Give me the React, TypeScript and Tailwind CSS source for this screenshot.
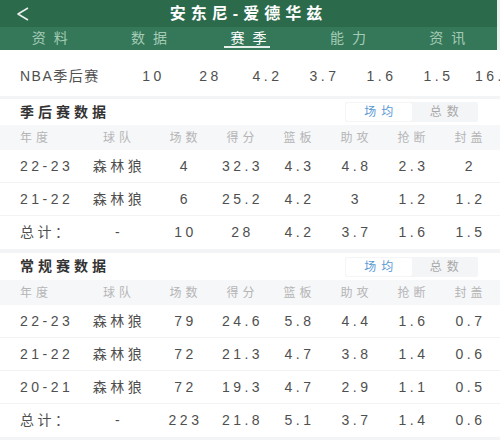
import React from 'react';

type Row = string[];

const tabs = ['资料', '数据', '赛季', '能力', '资讯'];

const columns = ['年度', '球队', '场数', '得分', '篮板', '助攻', '抢断', '封盖'];

const playoffRows: Row[] = [
  ['22-23', '森林狼', '4', '32.3', '4.3', '4.8', '2.3', '2'],
  ['21-22', '森林狼', '6', '25.2', '4.2', '3', '1.2', '1.2'],
  ['总计：', '-', '10', '28', '4.2', '3.7', '1.6', '1.5'],
];

const regularRows: Row[] = [
  ['22-23', '森林狼', '79', '24.6', '5.8', '4.4', '1.6', '0.7'],
  ['21-22', '森林狼', '72', '21.3', '4.7', '3.8', '1.4', '0.6'],
  ['20-21', '森林狼', '72', '19.3', '4.7', '2.9', '1.1', '0.5'],
  ['总计：', '-', '223', '21.8', '5.1', '3.7', '1.4', '0.6'],
];

// 8 columns: year, team, then six stats
const gridCols = 'grid grid-cols-[59px_76px_repeat(6,57px)] pl-[20px]';

function ToggleAvgTotal() {
  return (
    <div className="flex h-[20px] w-[133px] rounded-[2px] bg-[#f4f5f7] p-[1px] text-[12px] tracking-[5px]">
      <div className="flex flex-1 items-center justify-center rounded-[2px] bg-white pl-[5px] text-[#5a9ad3]">场均</div>
      <div className="flex flex-1 items-center justify-center pl-[5px] text-[#a8a8a8]">总数</div>
    </div>
  );
}

function StatTable({ title, rows, titleHeight }: { title: string; rows: Row[]; titleHeight: string }) {
  return (
    <div>
      <div className={`flex items-center justify-between pl-[20px] pr-[22px] ${titleHeight}`}>
        <span className="text-[14px] font-bold tracking-[4px] text-[#333]">{title}</span>
        <ToggleAvgTotal />
      </div>
      <div className={`${gridCols} h-[25px] items-center bg-[#f6f7f9] text-[12px] tracking-[4px] text-[#b5b5b5]`}>
        {columns.map((c, i) => (
          <span key={c} className={i === 0 ? 'text-left' : 'pl-[4px] text-center'}>
            {c}
          </span>
        ))}
      </div>
      {rows.map((r, ri) => (
        <div
          key={ri}
          className={`${gridCols} h-[33px] items-center text-[14px] tracking-[3.5px] text-[#4f4f4f] ${
            ri < rows.length - 1 ? 'border-b border-[#f3f3f3]' : ''
          }`}
        >
          {r.map((v, i) => (
            <span key={i} className={i === 0 ? 'text-left' : 'pl-[4px] text-center'}>
              {v}
            </span>
          ))}
        </div>
      ))}
    </div>
  );
}

export default function App() {
  const nbaStats = ['10', '28', '4.2', '3.7', '1.6', '1.5', '16.4'];

  return (
    <div className="h-[440px] w-[500px] overflow-hidden bg-[#f3f4f6] font-['Liberation_Sans','Noto_Sans_CJK_SC',sans-serif]">
      {/* Top bar */}
      <div className="border-r-[3px] border-[#e7f2ec]">
        <div className="flex h-[27px] items-center bg-[#2c6a4c] pl-[16px]">
          <svg width="14" height="14" viewBox="0 0 14 14" fill="none" className="shrink-0">
            <polyline points="12,1 2,7 12,13" stroke="#e8f1ec" strokeWidth="1.5" strokeLinejoin="round" />
          </svg>
          <div className="flex-1 pr-[30px] text-center text-[16px] font-bold tracking-[5px] text-white">安东尼-爱德华兹</div>
        </div>
        <div className="grid h-[23px] grid-cols-5 bg-[#357859]">
          {tabs.map((t) => {
            const active = t === '赛季';
            return (
              <div key={t} className="flex items-center justify-center">
                <span
                  className={`relative pl-[8px] text-[14px] tracking-[8px] leading-[23px] ${
                    active ? 'text-white' : 'text-[#a4cbb6]'
                  }`}
                >
                  {t}
                  {active && <span className="absolute bottom-[2px] left-[2px] right-[4px] h-[2px] bg-[#e6f0eb]" />}
                </span>
              </div>
            );
          })}
        </div>
      </div>

      <div className="flex h-[46px] items-center overflow-hidden whitespace-nowrap bg-white pl-[20px] pt-[7px] text-[14px] tracking-[3.5px] text-[#4f4f4f]">
        <span className="w-[103px] shrink-0 tracking-[1.5px]">NBA季后赛</span>
        {nbaStats.map((s, i) => (
          <span key={i} className="w-[57px] shrink-0 pl-[4px] text-center">
            {s}
          </span>
        ))}
      </div>

      <div className="h-[3px]" />

      <div className="bg-white">
        <StatTable title="季后赛数据" rows={playoffRows} titleHeight="h-[26px]" />
      </div>

      <div className="h-[4px]" />

      <div className="bg-white">
        <StatTable title="常规赛数据" rows={regularRows} titleHeight="h-[27px]" />
      </div>
    </div>
  );
}
